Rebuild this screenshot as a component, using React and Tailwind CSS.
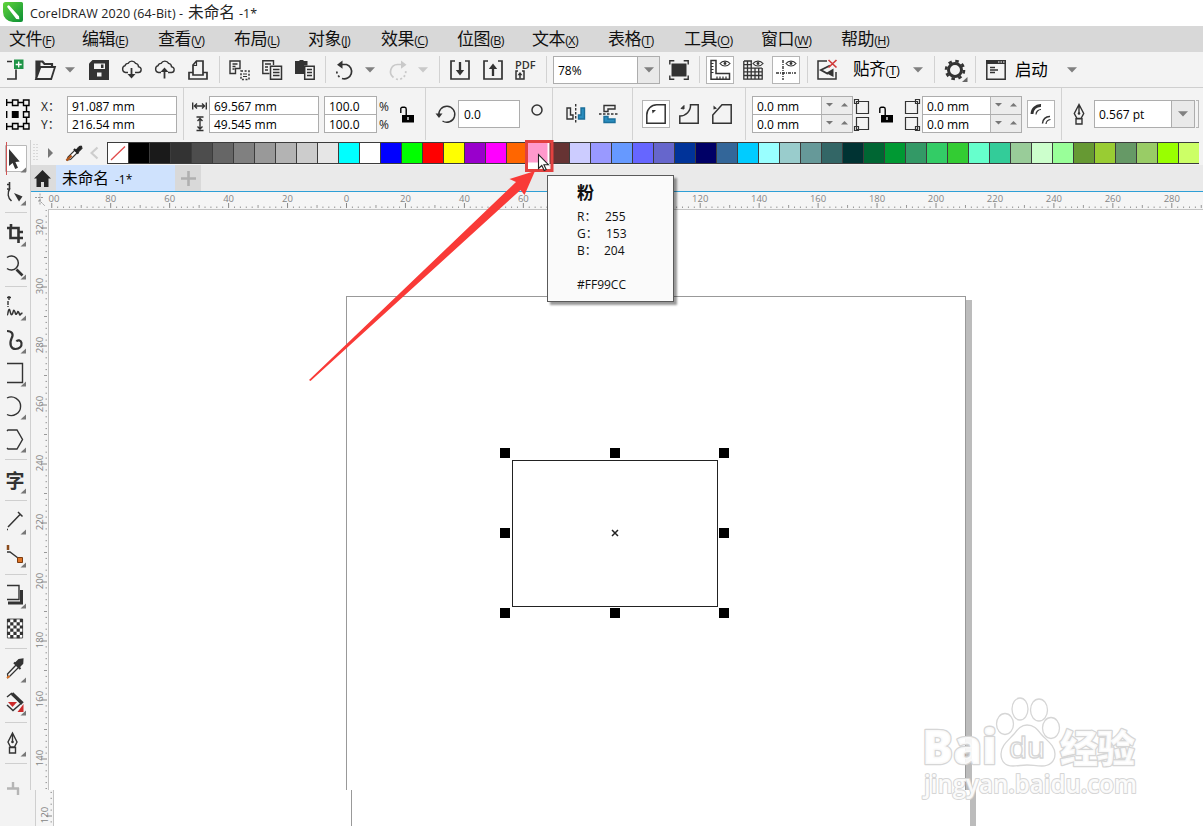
import { Fragment } from 'react';

const INK = '#333333';

const menus = [
  { label: '文件', hotkey: 'F', width: 'w-[73px]' },
  { label: '编辑', hotkey: 'E', width: 'w-[76px]' },
  { label: '查看', hotkey: 'V', width: 'w-[76px]' },
  { label: '布局', hotkey: 'L', width: 'w-[74px]' },
  { label: '对象', hotkey: 'J', width: 'w-[73px]' },
  { label: '效果', hotkey: 'C', width: 'w-[76px]' },
  { label: '位图', hotkey: 'B', width: 'w-[75px]' },
  { label: '文本', hotkey: 'X', width: 'w-[76px]' },
  { label: '表格', hotkey: 'T', width: 'w-[76px]' },
  { label: '工具', hotkey: 'O', width: 'w-[77px]' },
  { label: '窗口', hotkey: 'W', width: 'w-[80px]' },
  { label: '帮助', hotkey: 'H', width: 'w-[80px]' },
];

const palette = [
  '#000000', '#1a1a1a', '#333333', '#4d4d4d', '#666666', '#808080', '#999999', '#b3b3b3', '#cccccc', '#e6e6e6',
  '#00ffff', '#ffffff', '#0000ff', '#00ff00', '#ff0000', '#ffff00', '#9900cc', '#ff00ff', '#ff6600', '#ff99cc',
  '#663333', '#ccccff', '#9999ff', '#6699ff', '#6666ff', '#6666cc', '#003399', '#000066', '#336699', '#00ccff',
  '#99ffff', '#99cccc', '#669999', '#336666', '#003333', '#006633', '#009933', '#339966', '#33cc66', '#33cc33',
  '#66ffcc', '#33cc99', '#99cc99', '#ccffcc', '#99ff99', '#669933', '#99cc33', '#669966', '#99cc66', '#99ff00',
  '#ccff66',
];

// One ruler step is 20 document units.
const STEP = 58.95;

/* ---------- small building blocks ---------- */

function Icon({ w = 20, h = 20, children, className = '' }) {
  return (
    <svg
      width={w}
      height={h}
      viewBox={`0 0 ${w} ${h}`}
      fill="none"
      stroke={INK}
      strokeWidth="1.7"
      className={`block shrink-0 overflow-visible ${className}`}
    >
      {children}
    </svg>
  );
}

// Fixed-width slot of a toolbar, its content sits at the left edge.
function Cell({ w, className = '', children }) {
  return <div className={`flex shrink-0 items-center ${w} ${className}`}>{children}</div>;
}

function Separator({ w }) {
  return (
    <div className={`shrink-0 self-stretch ${w}`}>
      <div className="h-full w-px bg-[#d2d2d2]" />
    </div>
  );
}

function Caret({ color = '#808080' }) {
  return (
    <svg width="10" height="6" viewBox="0 0 10 6" className="block shrink-0">
      <path d="M0 0.3h10L5 5.5z" fill={color} />
    </svg>
  );
}

function Spinner() {
  return (
    <div className="flex h-full w-[31px] items-center justify-between border-l border-[#b5b5b5] bg-[#ececec] px-[4px]">
      <svg width="7" height="4" viewBox="0 0 7 4"><path d="M0 0h7L3.5 3.5z" fill="#777" /></svg>
      <svg width="7" height="4" viewBox="0 0 7 4"><path d="M0 3.5h7L3.5 0z" fill="#777" /></svg>
    </div>
  );
}

// Two stacked value fields that share a border.
function FieldPair({ w, values, spinner = false }) {
  return (
    <div className={`h-[37px] shrink-0 border border-[#adadad] bg-white ${w}`}>
      {values.map((value, i) => (
        <div
          key={i}
          className={`flex items-center justify-between text-[12px] leading-none ${i === 0 ? 'h-[18px] border-b border-[#adadad]' : 'h-[17px]'}`}
        >
          <span className="pt-[3px] pl-[4px] whitespace-pre">{value}</span>
          {spinner && <Spinner />}
        </div>
      ))}
    </div>
  );
}

function LockOpen() {
  return (
    <Icon w={15} h={17}>
      <path d="M0.8 7V3.5A1.8 1.8 0 0 1 2.6 1.2h2A1.8 1.8 0 0 1 6.2 3v6" stroke="#000" strokeWidth="1.4" />
      <path d="M2 9h12v7.500H2z" fill="#000" stroke="none" />
      <path d="M8 11v3" stroke="#fff" strokeWidth="1.3" />
    </Icon>
  );
}

/* ---------- bars ---------- */

function TitleBar() {
  return (
    <header className="flex h-[26px] shrink-0 items-center bg-white pl-[3px]">
      <svg width="20" height="20" viewBox="0 0 20 20" className="mb-[2px] block">
        <defs>
          <linearGradient id="logo" x1="0" y1="0" x2="1" y2="1">
            <stop offset="0" stopColor="#62d43b" />
            <stop offset="1" stopColor="#0b8f36" />
          </linearGradient>
        </defs>
        <path d="M2.500 0H18.500A1.500 1.500 0 0 1 20 1.500V18a2 2 0 0 1-2 2H10A10 10 0 0 1 0 10V2.500A2.500 2.500 0 0 1 2.500 0z" fill="url(#logo)" />
        <path d="M4.500 5.500a1.300 1.300 0 0 1 2-1.700l9.500 10.500.3 3-3-.4z" fill="#fff" />
      </svg>
      <div className="flex items-baseline pb-[2px] pl-[7px] text-[12.5px] text-[#222]">
        <span className="w-[158px] tracking-[0.1px] whitespace-nowrap">CorelDRAW 2020 (64-Bit) -</span>
        <span className="w-[51px] text-[15.7px] leading-[24px]">未命名</span>
        <span>-1*</span>
      </div>
    </header>
  );
}

function MenuBar() {
  return (
    <nav className="flex h-[26px] shrink-0 items-center bg-[#d8d8d8] pt-[2px] pl-[9px] text-[#111]">
      {menus.map((menu) => (
        <div key={menu.hotkey} className={`flex shrink-0 items-baseline leading-[24px] ${menu.width}`}>
          <span className="text-[17px] tracking-[-0.4px]">{menu.label}</span>
          <span className="text-[12.5px] tracking-[-0.6px]">
            (<u className="underline-offset-2">{menu.hotkey}</u>)
          </span>
        </div>
      ))}
    </nav>
  );
}

function StandardBar() {
  return (
    <div className="flex h-[36px] shrink-0 items-center border-b border-[#cfcfcf] bg-[#f3f3f3] py-[4px] pl-[7px]">
      <Cell w="w-[28px]">
        <Icon w={17}>
          <path d="M0 1.500h5M0 19h9V9.500" />
          <path d="M7 -.5h9.500v9.500H7z" fill="#1f9447" stroke="none" />
          <path d="M11.700 1.500v6M8.700 4.500h6" stroke="#fff" strokeWidth="1.300" />
        </Icon>
      </Cell>
      <Cell w="w-[30px]">
        <Icon w={21}>
          <path d="M1.500 18.500V1.500h6l2 2.500h7.500v3" strokeWidth="2.200" />
          <path d="M5.500 7H20l-3.800 12H1z" fill="#f3f3f3" strokeWidth="1.800" />
          <path d="M1 5v14l4.500-12V2H1z" fill={INK} stroke="none" />
        </Icon>
      </Cell>
      <Cell w="w-[24px]"><Caret /></Cell>
      <Cell w="w-[32px]">
        <Icon>
          <path d="M3.500 0H20v20H0V3.500z" fill={INK} stroke="none" />
          <path d="M5 3.500h11v5.500H5z" fill="#f3f3f3" stroke="none" />
          <path d="M12 4.500h2.500v3.500H12z" fill={INK} stroke="none" />
          <path d="M8 12.500h4.500v4H8z" fill="#f3f3f3" stroke="none" />
        </Icon>
      </Cell>
      <Cell w="w-[33px]">
        <Icon w={21}>
          <path d="M7 12.500H4.500a3.500 3.500 0 0 1-.4-6.800 3 3 0 0 1 3-2.300 4.200 4.200 0 0 1 7.500 0 3.500 3.500 0 0 1 2.900 3.300 2.900 2.900 0 0 1-.5 5.800h-3" strokeWidth="1.400" />
          <path d="M10.500 8v9" strokeWidth="1.800" />
          <path d="M6.500 14h8l-4 4.500z" fill={INK} stroke="none" />
        </Icon>
      </Cell>
      <Cell w="w-[34px]">
        <Icon w={21}>
          <path d="M7 12.500H4.500a3.500 3.500 0 0 1-.4-6.800 3 3 0 0 1 3-2.300 4.200 4.200 0 0 1 7.500 0 3.500 3.500 0 0 1 2.900 3.300 2.900 2.900 0 0 1-.5 5.800h-3" strokeWidth="1.400" />
          <path d="M10.500 10v8.500" strokeWidth="1.800" />
          <path d="M6.500 12h8l-4-4.500z" fill={INK} stroke="none" />
        </Icon>
      </Cell>
      <Cell w="w-[31px]">
        <Icon>
          <path d="M5 12.500H1V19h18v-6.500h-4" />
          <path d="M5 15V5l3.500-4H15v14z" />
          <path d="M5 5.500h3.500V1" strokeWidth="1.200" />
        </Icon>
      </Cell>
      <Separator w="w-[10px]" />
      <Cell w="w-[33px]">
        <Icon>
          <path d="M6.500 13.500H1V1h10v7.500H6.500zM3.500 4h5M3.500 6.500h3M3.500 9h2" strokeWidth="1.400" />
          <path d="M12 11h8v8.500h-8z" strokeWidth="1.500" strokeDasharray="2 1.600" />
          <path d="M14 14h4M14 16.500h4" strokeWidth="1.100" />
        </Icon>
      </Cell>
      <Cell w="w-[33px]">
        <Icon>
          <path d="M7.500 13.500H.8V.8h10.700V5M3 4h6M3 7h3M3 10h3" strokeWidth="1.400" />
          <path d="M8.500 6.200h11v13h-11zM11 9.500h6.500M11 12.500h6.500M11 15.500h6.500" strokeWidth="1.500" />
        </Icon>
      </Cell>
      <Cell w="w-[30px]">
        <Icon>
          <path d="M0 1h4l1-1h3l1 1h3.500v4.500H9V14H0z" fill={INK} stroke="none" />
          <path d="M9.700 6.200h9.500v13H9.700zM12 9.500h5M12 12.500h5M12 15.500h5" strokeWidth="1.500" />
        </Icon>
      </Cell>
      <Separator w="w-[10px]" />
      <Cell w="w-[30px]">
        <Icon>
          <path d="M6 4.500h5.500a7.200 7.200 0 1 1-4.500 14" />
          <path d="M4.500 17A7.500 7.500 0 0 1 2 9.500" strokeDasharray="2 2.200" />
          <path d="M7.500 .5L2 4.700l5.500 4z" fill={INK} stroke="none" />
        </Icon>
      </Cell>
      <Cell w="w-[23px]"><Caret /></Cell>
      <Cell w="w-[30px]">
        <Icon>
          <path d="M15 4.500H9.500A7.200 7.200 0 0 0 5.500 17.500" stroke="#c9c9c9" />
          <path d="M8 19a7.500 7.500 0 0 0 9.500-9" stroke="#c9c9c9" strokeDasharray="2 2.200" />
          <path d="M13 .5l5.500 4.200-5.500 4z" fill="#c9c9c9" stroke="none" />
        </Icon>
      </Cell>
      <Cell w="w-[21px]"><Caret color="#c9c9c9" /></Cell>
      <Separator w="w-[11px]" />
      <Cell w="w-[33px]">
        <Icon>
          <path d="M5 1H1v18h18V1h-4M10 2v10" />
          <path d="M5.800 10h8.400L10 15.500z" fill={INK} stroke="none" />
          <path d="M10 2v9" strokeWidth="2.300" />
        </Icon>
      </Cell>
      <Cell w="w-[32px]">
        <Icon>
          <path d="M5 1H1v18h18V1h-4" />
          <path d="M5.800 9h8.400L10 3.500z" fill={INK} stroke="none" />
          <path d="M10 8v8" strokeWidth="2.300" />
        </Icon>
      </Cell>
      <Cell w="w-[31px]">
        <div className="flex h-[20px] w-[21px] flex-col items-start">
          <span className="text-[11px] leading-[10px] font-semibold text-[#333]">PDF</span>
          <Icon w={10} h={10}>
            <path d="M3 1H1v8h8V1H7" strokeWidth="1.500" />
            <path d="M5 8.500V4" strokeWidth="1.500" />
            <path d="M2.500 5.200L5 2l2.500 3.200z" fill={INK} stroke="none" />
          </Icon>
        </div>
      </Cell>
      <Separator w="w-[7px]" />
      <Cell w="w-[116px]">
        <div className="flex h-[28px] w-[107px] items-stretch border border-[#adadad] bg-white">
          <span className="flex flex-1 items-center pt-[2px] pl-[4px] text-[12px]">78%</span>
          <span className="flex w-[22px] items-center justify-center border-l border-[#adadad] bg-[#e9e9e9]">
            <Caret />
          </span>
        </div>
      </Cell>
      <Cell w="w-[30px]">
        <Icon>
          <path d="M2.500 3.500h15v13h-15z" fill={INK} stroke="none" />
          <path d="M.8 4.500V.8h4.500M14.700.8h4.500v3.700M19.200 15.500v3.700h-4.500M5.300 19.200H.8v-3.700" strokeWidth="1.400" />
        </Icon>
      </Cell>
      <Separator w="w-[7px]" />
      <Cell w="w-[37px]">
        <div className="flex h-[28px] w-[28px] items-center justify-center border border-[#b5b5b5] bg-white">
          <Icon>
            <path d="M1 .5h5v13h13.500v5.700H1z" strokeWidth="1.500" />
            <path d="M1 3.500h2.500M1 6.500h2.500M1 9.500h2.500M1 12.500h2.500M7 19v-2.500M10 19v-2.500M13 19v-2.500M16 19v-2.500" strokeWidth="1.200" />
            <path d="M10 3.500c2.500-3.300 7.500-3.300 10 0-2.500 3.300-7.500 3.300-10 0z" strokeWidth="1.200" />
            <circle cx="15" cy="3.500" r="1.400" fill={INK} stroke="none" />
          </Icon>
        </div>
      </Cell>
      <Cell w="w-[29px]">
        <Icon>
          <path d="M.8 1v18.200h18.400V8M4.500 1v18M8.200 1v18M12 8v11M15.700 8v11M1 1h8M1 4.600h8M1 8.200h18M1 11.900h18M1 15.500h18" strokeWidth="1.300" />
          <path d="M10 3.500c2.500-3.300 7.500-3.300 10 0-2.500 3.300-7.500 3.300-10 0z" strokeWidth="1.200" />
          <circle cx="15" cy="3.500" r="1.400" fill={INK} stroke="none" />
        </Icon>
      </Cell>
      <Cell w="w-[35px]">
        <div className="flex h-[28px] w-[28px] items-center justify-center border border-[#b5b5b5] bg-white">
          <Icon>
            <path d="M7 0v20M0 13h20" strokeWidth="1.400" strokeDasharray="3 1 1 1" />
            <path d="M10 3.500c2.500-3.300 7.500-3.300 10 0-2.500 3.300-7.500 3.300-10 0z" strokeWidth="1.200" />
            <circle cx="15" cy="3.500" r="1.400" fill={INK} stroke="none" />
          </Icon>
        </div>
      </Cell>
      <Separator w="w-[10px]" />
      <Cell w="w-[36px]">
        <Icon>
          <path d="M10 1H1v18h18v-7" strokeWidth="1.500" />
          <path d="M13 5.500L4 10l7 4" strokeWidth="1.900" />
          <path d="M16.500 8.500V17L9 13z" fill={INK} stroke="none" />
          <path d="M11.500 0l8 7.500M19.500 0l-8 7.500" stroke="#d03a3a" strokeWidth="1.700" />
        </Icon>
      </Cell>
      <Cell w="w-[60px]">
        <span className="flex items-baseline leading-none">
          <span className="text-[16.500px] tracking-[-0.2px]">贴齐</span>
          <span className="text-[13px] tracking-[-0.3px]">(<u className="underline-offset-2">T</u>)</span>
        </span>
      </Cell>
      <Cell w="w-[21px]"><Caret /></Cell>
      <Separator w="w-[11px]" />
      <Cell w="w-[30px]">
        <Icon w={23} h={24}>
          <circle cx="10" cy="12" r="6.500" strokeWidth="3" />
          <circle cx="10" cy="12" r="9" strokeWidth="2.600" strokeDasharray="3.500 3.570" />
          <path d="M22.500 19v5h-5.500z" fill="#666" stroke="none" />
        </Icon>
      </Cell>
      <Separator w="w-[11px]" />
      <Cell w="w-[29px]">
        <Icon>
          <path d="M.8.800h18.400v18.400H.8z" strokeWidth="1.500" />
          <path d="M0 0h20v4H0z" fill={INK} stroke="none" />
          <path d="M12 2h1.500M14.500 2H16M17 2h1.500" stroke="#fff" strokeWidth="1.100" />
          <path d="M4 7.500h5M4 10h8M4 12.500h5" strokeWidth="1.400" />
        </Icon>
      </Cell>
      <Cell w="w-[52px]"><span className="pt-[1px] text-[16.500px] leading-none tracking-[-0.3px]">启动</span></Cell>
      <Caret />
    </div>
  );
}

// Corner thumbnails next to the corner radius fields.
function CornerBoxes({ side }) {
  const left = side === 'left';
  return (
    <Icon w={16} h={33}>
      <path
        d={left ? 'M3.500 3.500h12v12h-12zM3.500 19.500h12v12h-12z' : 'M1.500 3.500h12v12h-12zM1.500 19.500h12v12h-12z'}
        strokeWidth="1.200"
      />
      <path
        d={left ? 'M1.500 1.500h4v4h-4zM1.500 28.500h4v4h-4z' : 'M11.500 1.500h4v4h-4zM11.500 28.500h4v4h-4z'}
        strokeWidth="1.200"
      />
    </Icon>
  );
}

function PropertyBar() {
  return (
    <div className="flex h-[52px] shrink-0 items-center bg-[#f3f3f3] pl-[6px]">
      <Cell w="w-[35px]">
        <Icon w={25} h={31}>
          <g stroke="#000" strokeWidth="1.400">
            <path d="M.7 0v7M1 3.500h5M12 3.500h5M.7 12v7M.7 24v7M1 27.500h5M12 27.500h5M20.500 7v5M20.500 19v5" />
            <path d="M6.500 1h5.500v5.500H6.500zM17.500 1H23v5.500h-5.500zM17.500 12.700H23v5.500h-5.500zM17.500 24.500H23V30h-5.500zM6.500 24.500H12V30H6.500z" />
            <path d="M6.500 12.700H12v5.500H6.500z" fill="#000" />
          </g>
        </Icon>
      </Cell>
      <Cell w="w-[26px]">
        <div className="flex flex-col pt-[3px] text-[12px] leading-[18px] text-[#222]">
          <span>X：</span>
          <span>Y：</span>
        </div>
      </Cell>
      <Cell w="w-[116px]"><FieldPair w="w-[110px]" values={['91.087 mm', '216.54 mm']} /></Cell>
      <Separator w="w-[9px]" />
      <Cell w="w-[17px]">
        <Icon w={15} h={36}>
          <path d="M.7 6.500v7M14.300 6.500v7M2 10h11M5 7.500L2.500 10 5 12.500M10 7.500l2.500 2.500L10 12.500" strokeWidth="1.400" />
          <path d="M4.500 21h7M4.500 34.500h7M8 22v12M5.500 25L8 22.500l2.500 2.500M5.500 30.500L8 33l2.500-2.500" strokeWidth="1.400" />
        </Icon>
      </Cell>
      <Cell w="w-[115px]"><FieldPair w="w-[110px]" values={['69.567 mm', '49.545 mm']} /></Cell>
      <Cell w="w-[55px]"><FieldPair w="w-[53px]" values={['100.0', '100.0']} /></Cell>
      <Cell w="w-[21px]">
        <div className="flex flex-col pt-[3px] text-[12px] leading-[18px] text-[#222]">
          <span>%</span>
          <span>%</span>
        </div>
      </Cell>
      <Cell w="w-[25px]"><LockOpen /></Cell>
      <Separator w="w-[11px]" />
      <Cell w="w-[22px]">
        <Icon>
          <path d="M3 12A8 8 0 1 1 6.500 17" strokeWidth="1.400" />
          <path d="M-.5 9.500h7L3 14z" fill={INK} stroke="none" />
        </Icon>
      </Cell>
      <Cell w="w-[73px]">
        <div className="flex h-[28px] w-[62px] items-center border border-[#adadad] bg-white pt-px pl-[5px] text-[12px]">0.0</div>
      </Cell>
      <Cell w="w-[21px]" className="pb-[8px]">
        <Icon w={12} h={12}><circle cx="6" cy="6" r="5" strokeWidth="1.500" /></Icon>
      </Cell>
      <Separator w="w-[14px]" />
      <Cell w="w-[33px]">
        <Icon>
          <path d="M1 4h3.500v7H7v4H1z" strokeWidth="1.400" />
          <path d="M18.500 4H15v7h-2.500v4h6z" fill="#2a8dbe" stroke="#1b6f9b" strokeWidth="1.400" />
          <path d="M9.700 0v20" strokeWidth="1.400" strokeDasharray="2.500 1.500" />
        </Icon>
      </Cell>
      <Cell w="w-[33px]">
        <Icon>
          <path d="M16 1.500H5V7.500h4V5h7z" strokeWidth="1.400" />
          <path d="M16 18.500H5v-6h4V15h7z" fill="#2a8dbe" stroke="#1b6f9b" strokeWidth="1.400" />
          <path d="M0 10h20" strokeWidth="1.400" strokeDasharray="2.500 1.500" />
        </Icon>
      </Cell>
      <Separator w="w-[10px]" />
      <Cell w="w-[37px]">
        <div className="flex h-[28px] w-[28px] items-center justify-center border border-[#b5b5b5] bg-white">
          <Icon>
            <path d="M.8 19.200V11A10 10 0 0 1 11 .8h8.200v18.400z" strokeWidth="1.500" />
            <path d="M6 6h4L6.500 9.500z" fill={INK} stroke="none" />
          </Icon>
        </div>
      </Cell>
      <Cell w="w-[33px]">
        <Icon>
          <path d="M.8 19.200V12A10.500 10.500 0 0 0 11.500.8h7.700v18.400z" strokeWidth="1.500" />
          <path d="M2 4.500L5 1.500v3.500z" fill={INK} stroke={INK} strokeWidth="1" />
        </Icon>
      </Cell>
      <Cell w="w-[33px]">
        <Icon>
          <path d="M.8 19.200V11L10 .8h9.200v18.400z" strokeWidth="1.500" />
          <path d="M1.500 1.500l3.500 3-3.500 1z" fill={INK} stroke="none" />
        </Icon>
      </Cell>
      <Separator w="w-[7px]" />
      <FieldPair w="w-[101px]" values={['0.0 mm', '0.0 mm']} spinner />
      <Cell w="w-[26px]"><CornerBoxes side="left" /></Cell>
      <Cell w="w-[25px]"><LockOpen /></Cell>
      <Cell w="w-[18px]"><CornerBoxes side="right" /></Cell>
      <Cell w="w-[105px]"><FieldPair w="w-[100px]" values={['0.0 mm', '0.0 mm']} spinner /></Cell>
      <Cell w="w-[34px]">
        <div className="flex h-[28px] w-[28px] items-center justify-center border border-[#b5b5b5] bg-white">
          <Icon>
            <path d="M1 10A8.500 8.500 0 0 1 10 1.500" strokeWidth="2.800" />
            <path d="M5 10.500A5 5 0 0 1 10 5.500" strokeWidth="1.200" />
            <path d="M11.500 19.500a7 7 0 0 1 7.500-7" strokeWidth="1.500" />
            <path d="M15 20a5 5 0 0 1 4.500-4.500" strokeWidth="1.200" />
          </Icon>
        </div>
      </Cell>
      <Separator w="w-[12px]" />
      <Cell w="w-[21px]">
        <Icon w={12} h={22}>
          <path d="M6 1.500L1.300 10.500 4 15.500h4l2.700-5zM3 15.800h6V21H3zM6 2v8" strokeWidth="1.400" />
          <circle cx="6" cy="10.500" r="1.300" fill={INK} stroke="none" />
        </Icon>
      </Cell>
      <div className="flex h-[28px] w-[101px] shrink-0 items-stretch border border-[#adadad] bg-white">
        <span className="flex flex-1 items-center pt-[2px] pl-[4px] text-[12px]">0.567 pt</span>
        <span className="flex w-[23px] items-center justify-center border-l border-[#adadad] bg-[#e9e9e9]"><Caret /></span>
      </div>
      <div className="ml-px h-[28px] w-[3px] shrink-0 border-y border-r border-[#b5b5b5]" />
    </div>
  );
}

/* ---------- toolbox ---------- */

function Tool({ flyout = true, children }) {
  return (
    <svg
      width="30"
      height="33"
      viewBox="0 0 30 33"
      fill="none"
      stroke={INK}
      strokeWidth="1.600"
      className="block shrink-0 overflow-visible"
    >
      {children}
      {flyout && <path d="M26 24.500v5h-5.500z" fill="#777" stroke="none" />}
    </svg>
  );
}

function ToolGap() {
  return (
    <div className="h-[8px] shrink-0 pt-[3px] pl-[5px]">
      <div className="h-px w-[22px] bg-[#cfcfcf]" />
    </div>
  );
}

function Toolbox() {
  const checks = [];
  for (let row = 0; row < 6; row++) {
    for (let col = 0; col < 5; col++) {
      if ((row + col) % 2 === 0) checks.push(`M${7 + col * 3.2} ${7 + row * 3.2}h3.200v3.200h-3.200z`);
    }
  }

  return (
    <aside className="flex h-[650px] w-[31px] shrink-0 flex-col border-r border-[#cfcfcf] bg-[#f3f3f3] pt-[3px]">
      <Tool>
        <path d="M5.500 2.500h21v26h-21z" fill="#fff" stroke="#b9b9b9" strokeWidth="1" />
        <path d="M6.500 -1v33" stroke="#cf5555" strokeWidth="1" />
        <path d="M9 6v17l3.600-3 2.600 6 2.800-1.300-2.600-5.700 4.300-.6z" fill={INK} stroke="none" />
      </Tool>
      <Tool>
        <path d="M9.500 6v6M10 12c-3 5-2 10 1.500 13M7 8.500h2M7 13h3" />
        <path d="M14 17l8.500 3.500-3.500 5z" fill={INK} stroke="none" />
      </Tool>
      <ToolGap />
      <Tool>
        <path d="M7 11h3.500v10H23M11 7v3M10.500 11h8v15M18.500 15H23" strokeWidth="2.600" />
      </Tool>
      <Tool>
        <path d="M7 7.500a7 7 0 1 1 0 11" strokeWidth="1.500" />
        <path d="M16.500 19.500l6 6" strokeWidth="2.600" />
      </Tool>
      <ToolGap />
      <Tool>
        <path d="M7 6.500h5M9 5v4M8 10v6" strokeWidth="1.400" strokeDasharray="4 1" />
        <path d="M7 24c1.500 0 .5-4 2-5.500 1-1 1.500 6.500 3 5s1-5 2.200-4 1 5 2.300 3.500 1-3.500 2-2 1 4 2 2.500 1-1.500 2-1" strokeWidth="1.500" />
      </Tool>
      <Tool>
        <path d="M7 7c5 0 7 3 4.500 7.500C9 20 11 25 15.500 25c4 0 6.500-2.500 6-6-.5-3-4-3.500-5-1.500" strokeWidth="2.200" />
      </Tool>
      <Tool><path d="M7 6.500h15.500v19H7" strokeWidth="1.400" /></Tool>
      <Tool><path d="M7 8a9.300 9.300 0 1 1 0 16.500" strokeWidth="1.400" /></Tool>
      <Tool><path d="M7 8l1-1h9l5.500 9.500L17 26H8l-1-1" strokeWidth="1.400" /></Tool>
      <ToolGap />
      <Tool>
        <text
          x="5.500"
          y="24"
          fontSize="19"
          fontWeight="700"
          fill={INK}
          stroke="none"
          className="font-['Noto_Sans_CJK_SC',sans-serif]"
        >
          字
        </text>
      </Tool>
      <ToolGap />
      <Tool>
        <path d="M8 22L20.500 9M18 7l4.500 4.500" strokeWidth="1.500" />
        <path d="M7 24.500h1" />
      </Tool>
      <Tool>
        <path d="M8 7v5" stroke="#8a4b1c" strokeWidth="2.500" />
        <path d="M7 14h3l8 6" strokeWidth="1.400" />
        <path d="M17.500 19.500h5v5h-5z" fill="#dd7326" stroke="#7a3b10" strokeWidth="1" />
      </Tool>
      <ToolGap />
      <Tool>
        <path d="M7 6.500h12v14H7" strokeWidth="1.400" />
        <path d="M21.500 11v13H8" strokeWidth="3" />
      </Tool>
      <Tool flyout={false}>
        <path d="M7 7h16v19H7z" fill="#fff" stroke="none" />
        <path d={checks.join('')} fill={INK} stroke="none" />
        <path d="M7.400 7h15.200v19H7.400z" strokeWidth=".8" />
      </Tool>
      <ToolGap />
      <Tool>
        <path d="M8 24.500l-.500-3.500L17 11l2.500 2.500L10 23z" strokeWidth="1.300" />
        <path d="M14 9.500l6.500 6.500M16 10l3-3 3.500-.5-.2 3.800-3 3z" fill={INK} strokeWidth="2" />
        <path d="M7 25l2.500-2" stroke="#dd7326" strokeWidth="2" />
      </Tool>
      <Tool flyout={false}>
        <path d="M7 11l5-4M7 19l6 5.500 8-7L12.500 8" strokeWidth="1.500" />
        <path d="M12 7.500l10.500 10" strokeWidth="3.400" />
        <path d="M8 16h9l-4.500 5z" fill="#cc2a2a" stroke="none" />
        <path d="M23.500 18v8h-6z" fill="#cc2a2a" stroke="none" />
        <path d="M26 24.500v5h-5.500z" fill="#777" stroke="none" />
      </Tool>
      <ToolGap />
      <Tool>
        <path d="M12.500 6L8 15l2.500 5h4L17 15zM9.500 20.500h6V26h-6zM12.500 7v8" strokeWidth="1.400" />
        <circle cx="12.500" cy="15" r="1.300" fill={INK} stroke="none" />
      </Tool>
      <ToolGap />
      <Tool flyout={false}>
        <path d="M13 14v7M7 20.500h12M18 20v7" stroke="#b5b5b5" strokeWidth="2.400" />
      </Tool>
    </aside>
  );
}

/* ---------- palette, tabs, rulers ---------- */

function PaletteBar() {
  return (
    <div className="flex h-[25px] shrink-0 items-center overflow-hidden bg-[#f3f3f3] pl-[2px]">
      <svg width="14" height="20" viewBox="0 0 14 20" className="shrink-0">
        {[1, 4].map((x) => (
          <path key={x} d={`M${x} 1v18`} stroke="#bdbdbd" strokeWidth="1" strokeDasharray="1 2" />
        ))}
      </svg>
      <svg width="8" height="10" viewBox="0 0 8 10" className="shrink-0"><path d="M1 0l5 5-5 5z" fill="#777" /></svg>
      <svg width="18" height="18" viewBox="0 0 18 18" className="ml-[10px] shrink-0" fill="none">
        <path d="M2 16l1-3 7-7 2.500 2.500-7 7z" fill="#fff" stroke="#333" strokeWidth="1.200" />
        <path d="M1.500 16.500l5-5" stroke="#b4561a" strokeWidth="2.400" />
        <path d="M9 5l4.500 4.500" stroke="#222" strokeWidth="2.200" />
        <path d="M11 6l3-3.500 2.500-.500.500 2.500L13.500 8z" fill="#222" stroke="#222" />
      </svg>
      <svg width="9" height="14" viewBox="0 0 9 14" className="ml-[7px] shrink-0" fill="none">
        <path d="M7.500 1.500L1.500 7l6 5.500" stroke="#cdcdcd" strokeWidth="2.200" />
      </svg>
      <div className="ml-[8px] flex h-[22px] shrink-0 border border-r-0 border-[#3c3c3c]">
        <div className="h-full w-[20px] shrink-0 bg-white">
          <svg width="20" height="20" viewBox="0 0 20 20"><path d="M3 17L17 3.500" stroke="#e04a4a" strokeWidth="1.300" /></svg>
        </div>
        {palette.map((color) => (
          <div
            key={color}
            className="h-full w-[21px] shrink-0 border-l border-[#3c3c3c]"
            style={{ backgroundColor: color }}
          />
        ))}
      </div>
    </div>
  );
}

function DocumentTabs() {
  return (
    <div className="flex h-[27px] shrink-0 border-b border-[#2e9fd6] bg-[#eaeaea]">
      <div className="flex w-[25px] items-center justify-center bg-[#dcdcdc]">
        <svg width="17" height="17" viewBox="0 0 17 17" className="mr-[3px]">
          <path d="M8.500 0L17 8.500h-2.500V17H10v-5H7v5H2.500V8.500H0z" fill="#262626" />
        </svg>
      </div>
      <div className="flex w-[119px] items-baseline bg-[#cfe2fd] pt-[1px] pl-[6px] leading-[25px]">
        <span className="w-[53px] text-[15.700px]">未命名</span>
        <span className="text-[12px]">-1*</span>
      </div>
      <div className="flex w-[26px] items-center justify-center bg-[#d9d9d9]">
        <svg width="15" height="15" viewBox="0 0 15 15"><path d="M7.500 0v15M0 7.500h15" stroke="#b0b0b0" strokeWidth="2.600" /></svg>
      </div>
    </div>
  );
}

function HorizontalRuler() {
  const majors = Array.from({ length: 20 }, (_, i) => i - 5);
  // 80 and 100 stay blank under the open tooltip
  const label = (n) => {
    if (n === -5) return '00';
    return n === 4 || n === 5 ? null : Math.abs(n) * 20;
  };
  return (
    <svg width="1172" height="18" viewBox="0 0 1172 18" className="block shrink-0 bg-[#f5f5f5]">
      <path d="M17 17.500h1155" stroke="#c4c4c4" />
      <path d="M4 5.500h9M9 1.500v11M8 8l6 6M8 8v3M8 8h3" stroke="#999" fill="none" strokeDasharray="2 1" />
      {majors.map((n) => {
        const x = 315.5 + n * STEP;
        return (
          <Fragment key={n}>
            <path d={`M${x} 11v5`} stroke="#888" />
            {Array.from({ length: 9 }, (_, k) => (
              <path key={k} d={`M${x + (k + 1) * (STEP / 10)} ${k === 4 ? 13 : 14.5}v${k === 4 ? 3 : 1.5}`} stroke="#999" />
            ))}
            {label(n) !== null && (
              <text
                x={n === -5 ? 23 : x}
                y="10"
                fontSize="9.500"
                textAnchor="middle"
                fill="#858585"
                className="font-['Open_Sans',sans-serif]"
              >
                {label(n)}
              </text>
            )}
          </Fragment>
        );
      })}
    </svg>
  );
}

function VerticalRuler({ height, first, firstY, count }) {
  return (
    <svg width="18" height={height} viewBox={`0 0 18 ${height}`} className="block shrink-0 bg-[#f5f5f5]">
      <path d={`M17.500 0v${height}`} stroke="#c4c4c4" />
      {Array.from({ length: count }, (_, i) => {
        const y = firstY + i * 59;
        return (
          <Fragment key={i}>
            <path d={`M10 ${y}h6`} stroke="#888" />
            {Array.from({ length: 9 }, (_, k) => (
              <path key={k} d={`M${k === 4 ? 13 : 14.5} ${y - (k + 1) * 5.9}h${k === 4 ? 3 : 1.5}`} stroke="#999" />
            ))}
            {i === count - 1 &&
              Array.from({ length: 6 }, (_, k) => (
                <path key={`e${k}`} d={`M14.500 ${y + (k + 1) * 5.9}h1.500`} stroke="#999" />
              ))}
            <text
              transform={`translate(11.500 ${y - 1}) rotate(-90)`}
              fontSize="9.500"
              textAnchor="middle"
              fill="#858585"
              className="font-['Open_Sans',sans-serif]"
            >
              {first - i * 20}
            </text>
          </Fragment>
        );
      })}
    </svg>
  );
}

/* ---------- canvas ---------- */

function Selection() {
  const xs = ['left-[-13px]', 'left-[97px]', 'left-[206px]'];
  const ys = ['top-[-13px]', 'top-[67px]', 'top-[147px]'];
  return (
    <div className="absolute top-[250px] left-[463px] h-[147px] w-[206px] border border-[#222]">
      {ys.map((top, r) =>
        xs.map((left, c) =>
          r === 1 && c === 1 ? null : <div key={left + top} className={`absolute h-[10px] w-[10px] bg-black ${left} ${top}`} />,
        ),
      )}
      <svg width="8" height="8" viewBox="0 0 8 8" className="absolute top-[68px] left-[98px]">
        <path d="M1 1l6 6M7 1L1 7" stroke="#222" strokeWidth="1.500" />
      </svg>
    </div>
  );
}

function Canvas() {
  return (
    <main className="relative h-[580px] flex-1 overflow-hidden bg-white">
      <div className="absolute top-[90px] left-[917px] h-[490px] w-[6px] bg-[#bcbcbc]" />
      <div className="absolute top-[86px] left-[297px] h-[600px] w-[620px] border border-[#999] bg-white" />
      <Selection />
    </main>
  );
}

function ColorTooltip() {
  const rows = [
    { channel: 'R：', value: '255', pad: 'w-[28px]' },
    { channel: 'G：', value: '153', pad: 'w-[29px]' },
    { channel: 'B：', value: '204', pad: 'w-[27px]' },
  ];
  return (
    <div className="absolute top-[175px] left-[547px] h-[127px] w-[127px] border border-[#5a5a5a] bg-[#fafafa] pt-[6px] pl-[29px] text-[12px] leading-[17px] text-[#111] shadow-[3px_3px_2px_rgba(0,0,0,0.4)]">
      <p className="h-[26px] text-[17px] leading-[22px] font-bold">粉</p>
      {rows.map((row) => (
        <p key={row.value} className="flex">
          <span className={row.pad}>{row.channel}</span>
          <span>{row.value}</span>
        </p>
      ))}
      <p className="mt-[17px]">#FF99CC</p>
    </div>
  );
}

function Annotation() {
  return (
    <svg width="260" height="250" viewBox="300 136 260 250" className="absolute top-[136px] left-[300px]" fill="none">
      <path d="M527.500 162.500h22v7h-22z" fill="#fff" />
      <path d="M548.500 143v20" stroke="#fff" strokeWidth="2" />
      <path d="M526.500 141.500h25.500v29h-25.500z" stroke="#e2413f" strokeWidth="3" />
      <path d="M309 380L516 182l-6.500-3L535 171l-10.500 24-4-5L310.500 381z" fill="#f93a37" />
      <path d="M538.500 154.500v14l3.300-3 2.400 5 2-.9-2.300-4.900h4.500z" fill="#fff" stroke="#222" strokeWidth="1.100" />
    </svg>
  );
}

function Watermark() {
  return (
    <svg
      width="224"
      height="108"
      viewBox="918 694 224 108"
      className="absolute top-[694px] left-[918px]"
      fill="#fff"
      fillOpacity="0.9"
      stroke="#d6d6d6"
      strokeWidth="1.300"
      strokeLinejoin="round"
    >
      <g strokeWidth="2.600" paintOrder="stroke">
        <text x="922" y="764" fontSize="47" fontWeight="800" textLength="75" lengthAdjust="spacingAndGlyphs" className="font-['Open_Sans',sans-serif]">Bai</text>
        <text x="1060" y="762" fontSize="38" fontWeight="900" textLength="75" className="font-['Noto_Sans_CJK_SC',sans-serif]">经验</text>
      </g>
      <ellipse cx="1005" cy="724" rx="8.500" ry="10.500" />
      <ellipse cx="1020" cy="709" rx="8" ry="11" />
      <ellipse cx="1039" cy="710" rx="8.500" ry="11" />
      <ellipse cx="1051" cy="728" rx="8.500" ry="10.500" />
      <path d="M1027 725c7 0 10 4 14 9 5 6 14 11 14 20 0 8-6 12-13 12-6 0-10-1-15-1s-9 1-14 1c-7 0-12-4-12-12 0-9 8-14 13-20 4-5 7-9 13-9z" />
      <text x="1009" y="758" fontSize="29" fontWeight="400" textLength="36" lengthAdjust="spacingAndGlyphs" className="font-['Liberation_Sans',sans-serif]">du</text>
      <text x="924" y="793" fontSize="25" fontWeight="600" textLength="213" lengthAdjust="spacingAndGlyphs" paintOrder="stroke" strokeWidth="2" className="font-['Open_Sans',sans-serif]">jingyan.baidu.com</text>
    </svg>
  );
}

export default function App() {
  return (
    <div className="relative flex h-[826px] w-[1203px] flex-col overflow-hidden bg-[#f3f3f3] font-['Open_Sans','Noto_Sans_CJK_SC',sans-serif] text-black">
      <TitleBar />
      <MenuBar />
      <StandardBar />
      <PropertyBar />

      <div className="flex h-[650px] shrink-0">
        <Toolbox />
        <div className="flex min-w-0 flex-1 flex-col">
          <PaletteBar />
          <DocumentTabs />
          <HorizontalRuler />
          <div className="flex min-h-0 flex-1">
            <VerticalRuler height={580} first={320} firstY={18} count={10} />
            <Canvas />
          </div>
        </div>
      </div>

      {/* bottom strip, offset 5px from the rows above */}
      <div className="flex h-[36px] shrink-0">
        <div className="w-[5px] shrink-0" />
        <div className="w-[31px] shrink-0 border-r border-[#cfcfcf]" />
        <VerticalRuler height={36} first={120} firstY={26} count={1} />
        <div className="flex flex-1 bg-white pl-[297px]">
          <div className="w-[619px] border-l border-[#999]" />
          <div className="w-[6px] bg-[#bcbcbc]" />
        </div>
      </div>

      <Watermark />
      <Annotation />
      <ColorTooltip />
    </div>
  );
}
